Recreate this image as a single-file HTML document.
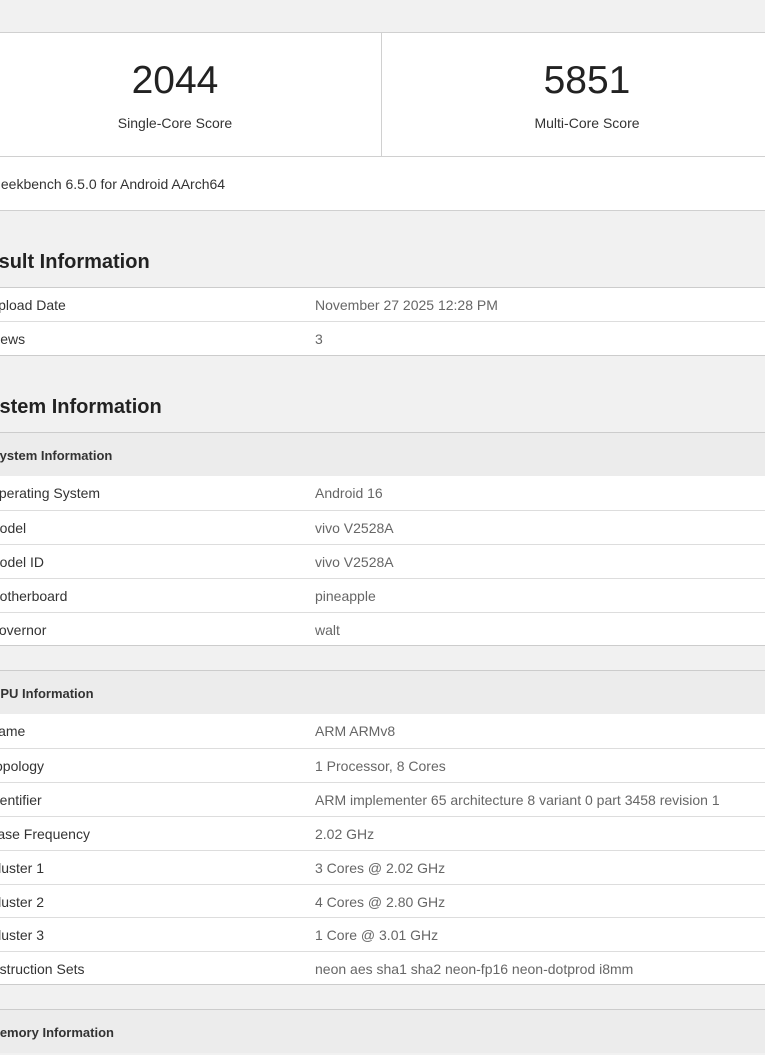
<!DOCTYPE html>
<html><head><meta charset="utf-8"><style>
*{margin:0;padding:0;box-sizing:border-box}
body{width:765px;height:1054px;overflow:hidden;background:#f1f1f1;font-family:"Liberation Sans",Arial,sans-serif;color:#333;position:relative}
.a{position:absolute}
.panel{position:absolute;left:-40px;width:850px;background:#fff;border-top:1px solid #d0d0d0;border-bottom:1px solid #d0d0d0}
.row{position:absolute;left:-40px;width:850px;height:34px;background:#fff;border-top:1px solid #ddd;font-size:14px;line-height:34px}
.row .k{position:absolute;left:28px;color:#333;white-space:nowrap}
.row .v{position:absolute;left:355px;color:#666;white-space:nowrap}
.sub{position:absolute;left:-40px;width:850px;height:44px;background:#ececec;border-top:1px solid #ccc;font-size:13px;font-weight:bold;line-height:45px}
.sub span{position:absolute;left:31px;white-space:nowrap}
h2{position:absolute;font-size:20px;font-weight:bold;color:#222;white-space:nowrap}
.bot{position:absolute;left:-40px;width:850px;height:1px;background:#ccc}
</style></head><body>
<div class="panel" style="top:32px;height:125px"></div>
<div class="a" style="left:381px;top:33px;width:1px;height:123px;background:#d0d0d0"></div>
<div class="a" style="left:-31px;width:412px;top:59px;text-align:center;font-size:39px;color:#222">2044</div>
<div class="a" style="left:-31px;width:412px;top:115px;text-align:center;font-size:14px">Single-Core Score</div>
<div class="a" style="left:382px;width:410px;top:59px;text-align:center;font-size:39px;color:#222">5851</div>
<div class="a" style="left:382px;width:410px;top:115px;text-align:center;font-size:14px">Multi-Core Score</div>
<div class="panel" style="top:156px;height:55px"></div>
<div class="a" style="left:-10px;top:176px;font-size:14px;white-space:nowrap">Geekbench 6.5.0 for Android AArch64</div>

<h2 style="left:-27px;top:251px">Result Information</h2>
<div class="row" style="top:287px;border-top-color:#ccc"><span class="k">Upload Date</span><span class="v">November 27 2025 12:28 PM</span></div>
<div class="row" style="top:321px"><span class="k">Views</span><span class="v">3</span></div>
<div class="bot" style="top:355px"></div>

<h2 style="left:-25px;top:396px">System Information</h2>
<div class="sub" style="top:432px"><span>System Information</span></div>
<div class="row" style="top:476px;border-top:none"><span class="k">Operating System</span><span class="v">Android 16</span></div>
<div class="row" style="top:510px"><span class="k">Model</span><span class="v">vivo V2528A</span></div>
<div class="row" style="top:544px"><span class="k">Model ID</span><span class="v">vivo V2528A</span></div>
<div class="row" style="top:578px"><span class="k">Motherboard</span><span class="v">pineapple</span></div>
<div class="row" style="top:612px"><span class="k">Governor</span><span class="v">walt</span></div>
<div class="bot" style="top:645px"></div>

<div class="sub" style="top:670px"><span>CPU Information</span></div>
<div class="row" style="top:714px;border-top:none"><span class="k">Name</span><span class="v">ARM ARMv8</span></div>
<div class="row" style="top:748px"><span class="k">Topology</span><span class="v">1 Processor, 8 Cores</span></div>
<div class="row" style="top:782px"><span class="k">Identifier</span><span class="v">ARM implementer 65 architecture 8 variant 0 part 3458 revision 1</span></div>
<div class="row" style="top:816px"><span class="k">Base Frequency</span><span class="v">2.02 GHz</span></div>
<div class="row" style="top:850px"><span class="k">Cluster 1</span><span class="v">3 Cores @ 2.02 GHz</span></div>
<div class="row" style="top:884px"><span class="k">Cluster 2</span><span class="v">4 Cores @ 2.80 GHz</span></div>
<div class="row" style="top:917px"><span class="k">Cluster 3</span><span class="v">1 Core @ 3.01 GHz</span></div>
<div class="row" style="top:951px"><span class="k">Instruction Sets</span><span class="v">neon aes sha1 sha2 neon-fp16 neon-dotprod i8mm</span></div>
<div class="bot" style="top:984px"></div>

<div class="sub" style="top:1009px"><span style="left:29px">Memory Information</span></div>
</body></html>
